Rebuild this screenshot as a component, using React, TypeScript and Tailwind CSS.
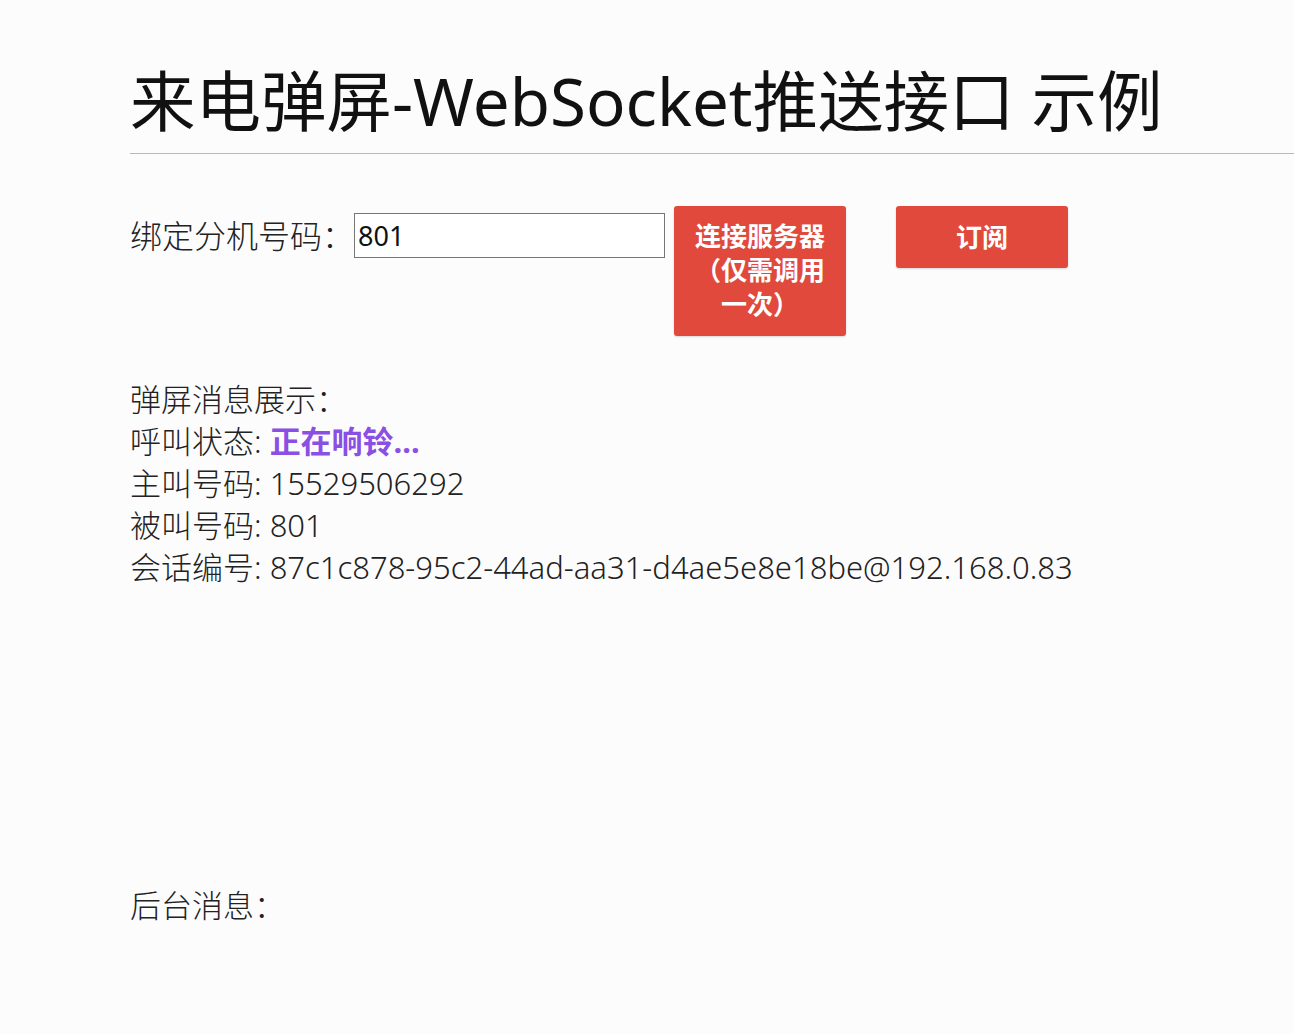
import React from 'react';

const FONT = 'font-["Noto_Sans","Noto_Sans_CJK_SC",sans-serif]';

// Call info shown in the popup area
const CALL_INFO = [
  { label: '主叫号码', value: '15529506292' },
  { label: '被叫号码', value: '801' },
  { label: '会话编号', value: '87c1c878-95c2-44ad-aa31-d4ae5e8e18be@192.168.0.83' },
];

export default function App() {
  const [ext, setExt] = React.useState('801');

  return (
    <div className={`min-h-screen bg-[#fdfcfd] pl-[130px] pt-[61px] text-[#1a1a1a] ${FONT}`}>
      {/* ── Title ── */}
      <h1 className="text-[65.5px] leading-[80px] font-normal text-[#111] pb-[12px] border-b border-[#b8b8b8]">
        来电弹屏-WebSocket推送接口 示例
      </h1>

      {/* ── Bind form ── */}
      <div className="flex items-start mt-[52px]">
        <span className="text-[32px] leading-[45px] font-light mt-[7px] text-[#222]">绑定分机号码：</span>
        <input
          value={ext}
          onChange={e => setExt(e.target.value)}
          className="mt-[7px] w-[311px] h-[45px] border border-[#767676] bg-white px-[3px] text-[27px] text-[#111] outline-none"
        />
        <button
          type="button"
          className="ml-[9px] w-[172px] px-[18px] pt-[13px] pb-[15px] rounded-[3px] bg-[#e0493b] text-white text-[26px] leading-[34px] font-bold text-center shadow-[0_1px_2px_rgba(0,0,0,0.15)]"
        >
          连接服务器（仅需调用一次）
        </button>
        <button
          type="button"
          className="ml-[50px] w-[172px] py-[14px] rounded-[3px] bg-[#e0493b] text-white text-[26px] leading-[34px] font-bold text-center shadow-[0_1px_2px_rgba(0,0,0,0.15)]"
        >
          订阅
        </button>
      </div>

      {/* ── Popup display ── */}
      <div className="mt-[42px] text-[31px] leading-[42px] font-light text-[#222]">
        <div>弹屏消息展示：</div>
        <div>
          呼叫状态: <span className="font-bold text-[#8a4fe3]">正在响铃...</span>
        </div>
        {CALL_INFO.map(row => (
          <div key={row.label}>{row.label}: {row.value}</div>
        ))}
      </div>

      {/* ── Backend messages ── */}
      <div className="mt-[296px] text-[31px] leading-[42px] font-light text-[#222]">后台消息：</div>
    </div>
  );
}
